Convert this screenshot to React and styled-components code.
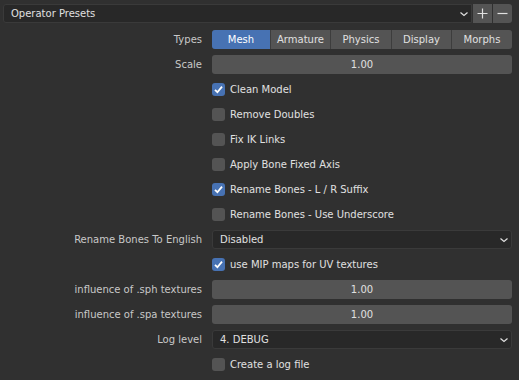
import React from 'react';
import styled, { createGlobalStyle } from 'styled-components';

const Global = createGlobalStyle`
  html, body { margin: 0; padding: 0; background: #303030; }
  body {
    font-family: "DejaVu Sans", "Liberation Sans", sans-serif;
    font-size: 10px;
    color: #e0e0e0;
    -webkit-font-smoothing: antialiased;
  }
`;

const Panel = styled.div`
  width: 519px;
  height: 380px;
  padding: 4px 7px 0 3px;
  box-sizing: border-box;
  background: #303030;
`;

const PresetBar = styled.div`
  display: flex;
  height: 19px;
  margin-bottom: 4px;
`;

const PresetMenu = styled.div`
  flex: 1;
  display: flex;
  align-items: center;
  justify-content: space-between;
  padding: 0 2px 0 7px;
  background: #282828;
  border: 1px solid #3a3a3a;
  border-radius: 3px 0 0 3px;
  box-sizing: border-box;
`;

const IconButton = styled.div`
  width: 19px;
  display: flex;
  align-items: center;
  justify-content: center;
  background: #545454;
  margin-left: 1px;
  border-radius: ${p => (p.last ? '0 3px 3px 0' : '0')};
`;

const Row = styled.div`
  display: flex;
  align-items: center;
  height: 25px;
`;

const Label = styled.div`
  width: 209px;
  padding-right: 10px;
  box-sizing: border-box;
  text-align: right;
  color: #c8c8c8;
  white-space: nowrap;
`;

const Field = styled.div`
  flex: 1;
  height: 19px;
  display: flex;
  align-items: center;
`;

const Segments = styled(Field)`
  background: #3d3d3d;
  border-radius: 3px;
  overflow: hidden;
  gap: 1px;
`;

const Segment = styled.div`
  flex: ${p => p.w};
  height: 100%;
  display: flex;
  align-items: center;
  justify-content: center;
  background: ${p => (p.active ? '#4772b3' : '#545454')};
  color: ${p => (p.active ? '#ffffff' : '#e0e0e0')};
`;

const Number = styled(Field)`
  justify-content: center;
  background: #545454;
  border-radius: 3px;
`;

const Menu = styled(Field)`
  justify-content: space-between;
  padding: 0 2px 0 7px;
  background: #282828;
  border: 1px solid #3a3a3a;
  border-radius: 3px;
  box-sizing: border-box;
`;

const Check = styled.label`
  display: flex;
  align-items: center;
  gap: 5px;
  color: #e0e0e0;
`;

const Box = styled.span`
  width: 13px;
  height: 13px;
  border-radius: 3px;
  background: ${p => (p.on ? '#4772b3' : '#545454')};
  display: flex;
  align-items: center;
  justify-content: center;
`;

const Chevron = () => (
  <svg width="10" height="6" viewBox="0 0 10 6">
    <path d="M1.5 1.5 L5 4.5 L8.5 1.5" fill="none" stroke="#e0e0e0" strokeWidth="1.2" />
  </svg>
);

const Tick = () => (
  <svg width="11" height="11" viewBox="0 0 11 11">
    <path d="M2 5.8 L4.4 8.2 L9 2.6" fill="none" stroke="#ffffff" strokeWidth="1.8" />
  </svg>
);

function CheckRow({ on, children }) {
  return (
    <Row>
      <Label />
      <Check>
        <Box on={on}>{on && <Tick />}</Box>
        {children}
      </Check>
    </Row>
  );
}

export default function App() {
  return (
    <Panel>
      <Global />
      <PresetBar>
        <PresetMenu>
          <span>Operator Presets</span>
          <Chevron />
        </PresetMenu>
        <IconButton>
          <svg width="11" height="11" viewBox="0 0 11 11">
            <path d="M5.5 0.5 V10.5 M0.5 5.5 H10.5" stroke="#e0e0e0" strokeWidth="1.2" />
          </svg>
        </IconButton>
        <IconButton last>
          <svg width="11" height="11" viewBox="0 0 11 11">
            <path d="M0.5 5.5 H10.5" stroke="#e0e0e0" strokeWidth="1.2" />
          </svg>
        </IconButton>
      </PresetBar>

      <Row>
        <Label>Types</Label>
        <Segments>
          <Segment w={58} active>Mesh</Segment>
          <Segment w={59}>Armature</Segment>
          <Segment w={60}>Physics</Segment>
          <Segment w={59}>Display</Segment>
          <Segment w={60}>Morphs</Segment>
        </Segments>
      </Row>
      <Row>
        <Label>Scale</Label>
        <Number>1.00</Number>
      </Row>
      <CheckRow on>Clean Model</CheckRow>
      <CheckRow>Remove Doubles</CheckRow>
      <CheckRow>Fix IK Links</CheckRow>
      <CheckRow>Apply Bone Fixed Axis</CheckRow>
      <CheckRow on>Rename Bones - L / R Suffix</CheckRow>
      <CheckRow>Rename Bones - Use Underscore</CheckRow>
      <Row>
        <Label>Rename Bones To English</Label>
        <Menu>
          <span>Disabled</span>
          <Chevron />
        </Menu>
      </Row>
      <CheckRow on>use MIP maps for UV textures</CheckRow>
      <Row>
        <Label>influence of .sph textures</Label>
        <Number>1.00</Number>
      </Row>
      <Row>
        <Label>influence of .spa textures</Label>
        <Number>1.00</Number>
      </Row>
      <Row>
        <Label>Log level</Label>
        <Menu>
          <span>4. DEBUG</span>
          <Chevron />
        </Menu>
      </Row>
      <CheckRow>Create a log file</CheckRow>
    </Panel>
  );
}
